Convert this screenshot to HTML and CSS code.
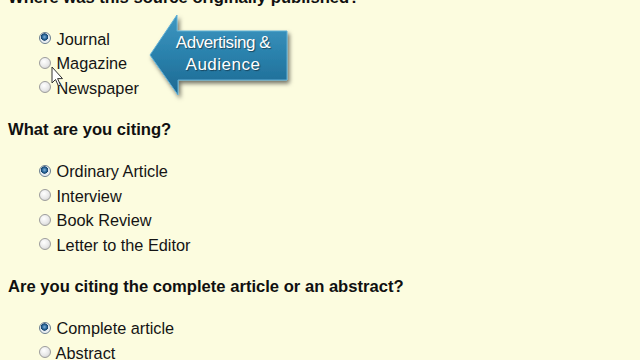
FILE: index.html
```html
<!DOCTYPE html>
<html>
<head>
<title>Cite a Source</title>
<link rel="stylesheet" href="styles.css">
</head>
<body>
<div class="page">
<div class="question">Where was this source originally published?</div>
<div class="options">
<label><input type="radio" name="pub" checked> Journal</label>
<label><input type="radio" name="pub"> Magazine</label>
<label><input type="radio" name="pub"> Newspaper</label>
</div>
<div class="question">What are you citing?</div>
<div class="options">
<label><input type="radio" name="kind" checked> Ordinary Article</label>
<label><input type="radio" name="kind"> Interview</label>
<label><input type="radio" name="kind"> Book Review</label>
<label><input type="radio" name="kind"> Letter to the Editor</label>
</div>
<div class="question">Are you citing the complete article or an abstract?</div>
<div class="options">
<label><input type="radio" name="whole" checked> Complete article</label>
<label><input type="radio" name="whole"> Abstract</label>
</div>
</div>

<div class="callout">
<svg width="160" height="95" viewBox="0 0 160 95">
<defs>
<linearGradient id="blue" x1="0" y1="0" x2="0" y2="1">
<stop offset="0" stop-color="#3f97c1"/>
<stop offset="0.5" stop-color="#2a81ac"/>
<stop offset="1" stop-color="#1d6891"/>
</linearGradient>
<filter id="shade" x="-20%" y="-20%" width="140%" height="140%">
<feDropShadow dx="2" dy="3" stdDeviation="2" flood-color="#000" flood-opacity="0.55"/>
</filter>
</defs>
<path d="M10 45 L37 5 L37 21 L147 21 L147 70 L38 70 L38 85 Z" fill="url(#blue)" stroke="#5eafd6" stroke-width="1" filter="url(#shade)"/>
</svg>
<div class="callout-text">
<div class="line1">Advertising &amp;</div>
<div class="line2">Audience</div>
</div>
</div>

<svg class="pointer" width="14" height="22" viewBox="0 0 14 22">
<path d="M1 1 L1 17 L4.5 13.5 L7.5 20 L9.5 19 L6.6 12.6 L11.5 12.6 Z" fill="#fff" stroke="#333" stroke-width="1" stroke-linejoin="round"/>
</svg>
</body>
</html>
```

FILE: styles.css
```css
body{
	margin: 0;
	background-color: #fcfcdf;
	font-family: "Liberation Sans", Arial, sans-serif;
	color: #141414;
	position: relative;
	height: 360px;
	overflow: hidden;
}
.page{
	padding: 0 8px;
	margin-top: -12.5px;
}
.question{
	font-weight: bold;
	font-size: 16.6px;
	line-height: 20px;
	color: #101010;
	margin-bottom: 19px;
}
.options{
	padding-left: 31px;
	margin-bottom: 20px;
}
.options label{
	display: block;
	font-size: 16.3px;
	line-height: 24.5px;
}
.options input{
	-webkit-appearance: none;
	appearance: none;
	width: 12px;
	height: 12px;
	margin: 0 1px 0 0;
	border-radius: 50%;
	border: 1px solid #9c9c9c;
	background: radial-gradient(circle at 40% 35%, #ffffff 0%, #e8e8e8 55%, #c4c4c4 100%);
	vertical-align: middle;
	position: relative;
	top: -2px;
	box-sizing: border-box;
}
.options input:checked{
	border-color: #6b7f90;
	background: radial-gradient(circle at 45% 40%, #7fb2dc 0%, #1f5a8c 32%, #17426a 42%, #dfe6ec 48%, #f4f6f8 75%, #c9d0d6 100%);
}
.callout{
	position: absolute;
	left: 140px;
	top: 10px;
	width: 160px;
	height: 95px;
}
.callout svg{
	display: block;
}
.callout-text{
	position: absolute;
	left: 23px;
	top: 22px;
	width: 120px;
	text-align: center;
	color: #fff;
	font-size: 17px;
	line-height: 22px;
	text-shadow: 1px 1px 1px rgba(0,0,0,0.45);
}
.line1{
	letter-spacing: -0.45px;
}
.line2{
	letter-spacing: 0.5px;
}
.pointer{
	position: absolute;
	left: 51px;
	top: 66px;
}
```
